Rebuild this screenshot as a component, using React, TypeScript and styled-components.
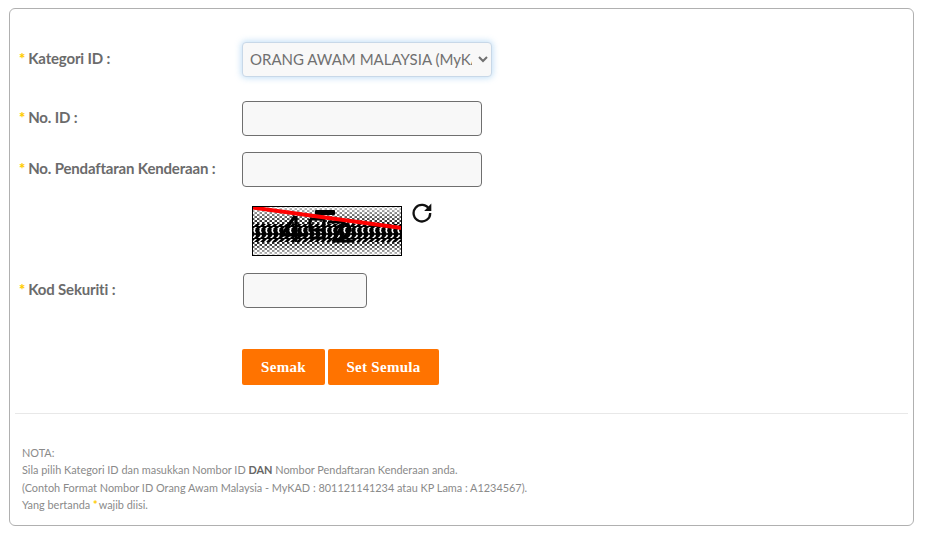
import React from 'react';
import styled, { createGlobalStyle } from 'styled-components';

const Global = createGlobalStyle`
  html, body { margin: 0; padding: 0; background: #fff; }
  body { font-family: Lato, "Open Sans", sans-serif; color: #666; }
`;

const Page = styled.div`
  box-sizing: border-box;
  width: 925px;
  height: 535px;
  padding: 8px 11px 9px 9px;
`;

const Card = styled.form`
  box-sizing: border-box;
  height: 100%;
  border: 1px solid #b0b0b0;
  border-radius: 6px;
  padding: 33px 5px 0;
  display: flex;
  flex-direction: column;
`;

const Row = styled.div<{ $mb: number }>`
  display: grid;
  grid-template-columns: 227px 1fr;
  align-items: start;
  margin-bottom: ${p => p.$mb}px;
`;

const Label = styled.label`
  padding: 6px 0 0 4px;
  font-size: 15px;
  font-weight: 700;
  line-height: 20px;
  color: #6b6b6b;
  letter-spacing: -0.17px;
  white-space: nowrap;
`;

const Star = styled.span`
  color: #ffcc00;
  font-weight: 900;
  margin-right: 3px;
`;

const Select = styled.select`
  box-sizing: border-box;
  width: 250px;
  height: 35px;
  padding: 0 3px 2px;
  font-family: Lato, sans-serif;
  font-size: 15px;
  color: #707070;
  background-color: #f8f8f8;
  border: 1px solid #c8d8e8;
  border-radius: 4px;
  outline: none;
  box-shadow: 0 0 6px 1px rgba(102, 175, 233, 0.4);
`;

const Input = styled.input<{ $w: number; $ml?: number }>`
  display: block;
  box-sizing: border-box;
  width: ${p => p.$w}px;
  height: 35px;
  margin-left: ${p => p.$ml ?? 0}px;
  background: #f8f8f8;
  border: 1px solid #6f6f6f;
  border-radius: 4px;
  outline: none;
`;

const CaptchaWrap = styled.div`
  display: flex;
  align-items: flex-start;
  padding-left: 10px;
  gap: 9px;
`;

const Refresh = styled.span`
  display: block;
  width: 22px;
  height: 22px;
  margin-top: -5px;
`;

const Buttons = styled.div`
  display: flex;
  gap: 3px;
`;

const Button = styled.button<{ $w: number }>`
  width: ${p => p.$w}px;
  height: 36px;
  padding: 0;
  border: 0;
  border-radius: 2px;
  background: #ff7300;
  color: #fff;
  font-family: "Liberation Serif", serif;
  font-size: 15px;
  font-weight: 700;
  letter-spacing: 0.3px;
`;

const Rule = styled.hr`
  width: 100%;
  margin: 0 0 30px;
  border: 0;
  border-top: 1px solid #e8e8e8;
`;

const Note = styled.div`
  padding-left: 7px;
  font-size: 10.9px;
  line-height: 17.3px;
  color: #8a8a8a;

  & b { color: #666; }
  & span { margin-right: 1px; }
`;

const Captcha = () => {
  // the distorted code image, rebuilt as halftone bands
  return (
    <svg width="150" height="50" viewBox="0 0 150 50" style={{ display: 'block' }}>
      <defs>
        <pattern id="check" width="5" height="4" patternUnits="userSpaceOnUse">
          <rect width="5" height="4" fill="#fff" />
          <rect x="0" y="0" width="2.5" height="2" fill="#000" />
          <rect x="2.5" y="2" width="2.5" height="2" fill="#000" />
        </pattern>
        <pattern id="rings" width="6" height="7" patternUnits="userSpaceOnUse">
          <rect width="6" height="7" fill="#000" />
          <path d="M3.5 1 Q1 3.5 3.5 6" stroke="#fff" strokeWidth="1.6" fill="none" />
        </pattern>
        <pattern id="slant" width="6" height="4" patternUnits="userSpaceOnUse">
          <rect width="6" height="4" fill="#000" />
          <path d="M0 4 L3 1 L5 1 L2 4 Z" fill="#fff" />
        </pattern>
        <linearGradient id="top-fade" x1="0" y1="0" x2="0" y2="1">
          <stop offset="0" stopColor="#fff" stopOpacity="0.8" />
          <stop offset="1" stopColor="#fff" stopOpacity="0.1" />
        </linearGradient>
        <linearGradient id="bottom-fade" x1="0" y1="0" x2="0" y2="1">
          <stop offset="0" stopColor="#fff" stopOpacity="0.1" />
          <stop offset="1" stopColor="#fff" stopOpacity="0.8" />
        </linearGradient>
      </defs>
      <rect width="150" height="50" fill="#fff" />
      <rect y="1" width="150" height="17" fill="url(#check)" />
      <rect y="1" width="150" height="17" fill="url(#top-fade)" />
      <rect y="18" width="150" height="5" fill="url(#slant)" />
      <rect y="23" width="150" height="7" fill="url(#rings)" />
      <rect y="30" width="150" height="6" fill="url(#slant)" />
      <rect y="36" width="150" height="13" fill="url(#check)" />
      <rect y="36" width="150" height="13" fill="url(#bottom-fade)" />
      <g fill="none" stroke="#000" strokeWidth="3.2">
        <path d="M43 10 L30 29 L52 29 M44 10 L44 36" />
        <path d="M58 13 L72 13 L72 32 L58 32 M58 13 L58 24 L72 24" />
        <path d="M76 16 L92 16 L81 36" />
        <path d="M84 22 Q96 14 98 23 Q98 28 86 35 L102 35" />
      </g>
      <rect x="63" y="4" width="20" height="5" rx="1" fill="#000" />
      <path d="M0 1.5 L150 22" stroke="#f00" strokeWidth="4" fill="none" />
      <rect x="0.5" y="0.5" width="149" height="49" fill="none" stroke="#000" />
    </svg>
  );
};

const RefreshIcon = () => (
  <svg width="22" height="22" viewBox="0 0 22 22" fill="none">
    <path d="M18.2 8.2 A8.3 8.3 0 1 0 19.2 12" stroke="#111" strokeWidth="2.3" />
    <path d="M20.3 2.6 L20.3 10 L13.2 10 Z" fill="#111" />
  </svg>
);

const App = () => {
  return (
    <Page>
      <Global />
      <Card>
        <Row $mb={24}>
          <Label><Star>*</Star>Kategori ID :</Label>
          <Select defaultValue="awam">
            <option value="awam">ORANG AWAM MALAYSIA (MyKAD / KP Lama)</option>
          </Select>
        </Row>
        <Row $mb={16}>
          <Label><Star>*</Star>No. ID :</Label>
          <Input $w={240} />
        </Row>
        <Row $mb={19}>
          <Label><Star>*</Star>No. Pendaftaran Kenderaan :</Label>
          <Input $w={240} />
        </Row>
        <Row $mb={17}>
          <span />
          <CaptchaWrap>
            <Captcha />
            <Refresh><RefreshIcon /></Refresh>
          </CaptchaWrap>
        </Row>
        <Row $mb={41}>
          <Label><Star>*</Star>Kod Sekuriti :</Label>
          <Input $w={124} $ml={1} />
        </Row>
        <Row $mb={28}>
          <span />
          <Buttons>
            <Button type="button" $w={83}>Semak</Button>
            <Button type="button" $w={111}>Set Semula</Button>
          </Buttons>
        </Row>
        <Rule />
        <Note>
          NOTA:<br />
          Sila pilih Kategori ID dan masukkan Nombor ID <b>DAN</b> Nombor Pendaftaran Kenderaan anda.<br />
          (Contoh Format Nombor ID Orang Awam Malaysia - MyKAD : 801121141234 atau KP Lama : A1234567).<br />
          Yang bertanda <Star>*</Star>wajib diisi.
        </Note>
      </Card>
    </Page>
  );
};

export default App;
